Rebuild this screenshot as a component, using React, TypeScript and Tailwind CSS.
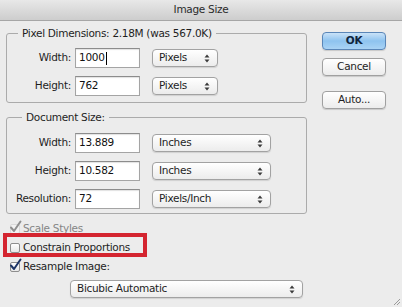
import React from "react";

const FONT = { fontFamily: '"DejaVu Sans", "Open Sans", sans-serif' };

function Arrows() {
  return (
    <svg width="6" height="9" viewBox="0 0 6 9" className="shrink-0">
      <path d="M3 0.5 L5.5 3.5 L0.5 3.5 Z" fill="#3a3a3a" />
      <path d="M3 8.5 L5.5 5.5 L0.5 5.5 Z" fill="#3a3a3a" />
    </svg>
  );
}

function Select({ label, width }: { label: string; width: string }) {
  return (
    <div
      className={`${width} h-[18px] flex items-center justify-between pl-[6px] pr-[7px] rounded-[4px] border border-[#a2a2a2] bg-gradient-to-b from-white to-[#ececec] shadow-[0_1px_1px_rgba(0,0,0,0.12)] text-[#1e1e1e]`}
    >
      <span>{label}</span>
      <Arrows />
    </div>
  );
}

function Field({ value, cursor }: { value: string; cursor?: boolean }) {
  return (
    <div className="w-[65px] h-[20px] flex items-center pl-[3px] bg-white border border-[#a4a4a4] border-t-[#8c8c8c] shadow-[inset_0_1px_1px_rgba(0,0,0,0.12)] text-[#111]">
      <span>{value}</span>
      {cursor && <span className="ml-px w-px h-[13px] bg-black" />}
    </div>
  );
}

function Row({
  label,
  value,
  unit,
  selWidth,
  cursor,
}: {
  label: string;
  value: string;
  unit: string;
  selWidth: string;
  cursor?: boolean;
}) {
  return (
    <div className="flex items-center h-[20px]">
      <div className="w-[64px] text-right text-[#1e1e1e]">{label}</div>
      <div className="ml-[4px]">
        <Field value={value} cursor={cursor} />
      </div>
      <div className="ml-[12px]">
        <Select label={unit} width={selWidth} />
      </div>
    </div>
  );
}

function Check({ checked, dim }: { checked?: boolean; dim?: boolean }) {
  return (
    <div className="relative w-[10px] h-[10px] shrink-0">
      <div
        className={`absolute inset-0 rounded-[2px] border ${
          dim ? "border-[#dadada] bg-[#f2f2f2]" : "border-[#8e8e8e] bg-gradient-to-b from-white to-[#e8e8e8]"
        }`}
      />
      {checked && (
        <svg width="13" height="13" viewBox="0 0 13 13" className="absolute -left-[1px] -top-[4px]">
          <path
            d="M2 7.5 L5 11 L11.5 1.5"
            fill="none"
            stroke={dim ? "#8f8f8f" : "#1d3566"}
            strokeWidth="2"
            strokeLinecap="round"
            strokeLinejoin="round"
          />
        </svg>
      )}
    </div>
  );
}

function Button({ label, primary }: { label: string; primary?: boolean }) {
  return (
    <div
      className={`w-[64px] h-[18px] flex items-center justify-center rounded-[4px] border ${
        primary
          ? "border-[#5a86b8] bg-gradient-to-b from-[#c9e2f8] via-[#8ec3ef] to-[#a9d3f5] text-[#10243d] font-bold"
          : "border-[#a0a0a0] bg-gradient-to-b from-white to-[#ececec] text-[#1e1e1e]"
      } shadow-[0_1px_1px_rgba(0,0,0,0.15)]`}
    >
      {label}
    </div>
  );
}

export default function App() {
  return (
    <div
      className="relative w-[402px] h-[307px] bg-[#ececec] overflow-hidden text-[10.5px] tracking-[-0.3px]"
      style={FONT}
    >
      {/* Title bar */}
      <div className="h-[21px] flex items-center justify-center border-b border-[#a6a6a6] bg-gradient-to-b from-[#e8e8e8] to-[#cdcdcd] text-[#2b2b2b]">
        Image Size
      </div>

      <div className="flex">
        {/* Left column */}
        <div className="ml-[6px] w-[301px]">
          <fieldset className="mt-[4px] border border-[#ababab] rounded-[3px] pt-[7px] pb-[6px]">
            <legend className="ml-[11px] px-[4px] leading-[16px] text-[#1e1e1e]">
              Pixel Dimensions: 2.18M (was 567.0K)
            </legend>
            <div className="flex flex-col gap-[8px]">
              <Row label="Width:" value="1000" unit="Pixels" selWidth="w-[66px]" cursor />
              <Row label="Height:" value="762" unit="Pixels" selWidth="w-[66px]" />
            </div>
          </fieldset>

          <fieldset className="mt-[6px] border border-[#ababab] rounded-[3px] pt-[8px] pb-[4px]">
            <legend className="ml-[15px] px-[4px] leading-[16px] text-[#1e1e1e]">
              Document Size:
            </legend>
            <div className="flex flex-col gap-[8px]">
              <Row label="Width:" value="13.889" unit="Inches" selWidth="w-[119px]" />
              <Row label="Height:" value="10.582" unit="Inches" selWidth="w-[119px]" />
              <Row label="Resolution:" value="72" unit="Pixels/Inch" selWidth="w-[119px]" />
            </div>
          </fieldset>

          <div className="mt-[5px] flex flex-col">
            <div className="h-[19px] flex items-center pl-[4px] gap-[3px] text-[#858585]">
              <Check checked dim />
              <span>Scale Styles</span>
            </div>
            <div className="relative h-[19px] flex items-center pl-[4px] gap-[3px] text-[#1e1e1e]">
              <div className="absolute left-[-3px] top-[-5px] w-[144px] h-[24px] border-[4px] border-[#d42530]" />
              <Check />
              <span>Constrain Proportions</span>
            </div>
            <div className="h-[19px] flex items-center pl-[4px] gap-[3px] text-[#1e1e1e]">
              <Check checked />
              <span>Resample Image:</span>
            </div>
          </div>

          <div className="mt-[4px] ml-[64px]">
            <Select label="Bicubic Automatic" width="w-[233px]" />
          </div>
        </div>

        {/* Right column */}
        <div className="ml-[15px] mt-[11px] flex flex-col">
          <Button label="OK" primary />
          <div className="mt-[8px]">
            <Button label="Cancel" />
          </div>
          <div className="mt-[15px]">
            <Button label="Auto..." />
          </div>
        </div>
      </div>

      {/* resize grip */}
      <svg width="8" height="8" viewBox="0 0 8 8" className="absolute right-[1px] bottom-[1px]">
        <path d="M7 1 L1 7 M7 4 L4 7" stroke="#9a9a9a" strokeWidth="1" />
      </svg>
    </div>
  );
}
